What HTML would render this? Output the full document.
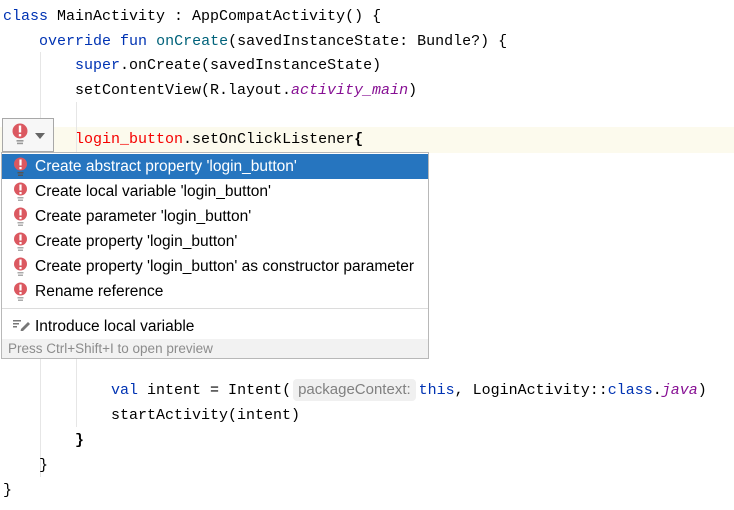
<!DOCTYPE html>
<html><head><meta charset="utf-8"><style>
html,body{margin:0;padding:0;background:#fff;width:734px;height:510px;overflow:hidden;position:relative}
.code{position:absolute;left:3px;font-family:"Liberation Mono",monospace;font-size:15px;white-space:pre;color:#000;line-height:25px;height:25px}
.kw{color:#0033b3}.fn{color:#00627a}.it{color:#871094;font-style:italic}.red{color:#f50000}
.guide{position:absolute;width:1px;background:#e6e6e6}
.cur{position:absolute;left:0;top:127px;width:734px;height:26px;background:#fcfaed}
.bulb{position:absolute;left:2px;top:118px;width:52px;height:34px;border:1px solid #a8a8a8;background:#f7f7f7;box-sizing:border-box}
.pop{position:absolute;left:1px;top:152px;width:428px;height:207px;border:1px solid #b8b8b8;background:#fff;box-sizing:border-box;font-family:"Liberation Sans",sans-serif;font-size:15.5px}
.it2{position:absolute;left:0;width:426px;height:25px;line-height:26px}
.it2 span{position:absolute;left:33px;top:0}
.sel{background:#2675bf;color:#fff}
.ic{position:absolute;left:11px;top:3px}
.foot{position:absolute;left:0;top:186px;width:426px;height:19px;background:#f2f2f2;color:#8c8c8c;font-size:13.5px;line-height:19px;padding-left:6px;box-sizing:border-box}
.hint{display:inline-block;background:#f0f0f0;color:#808080;font-family:"Liberation Sans",sans-serif;font-size:15px;border-radius:4px;padding:0 5px;line-height:22px;margin:0 3px 0 2px}
</style></head><body>
<div class="cur"></div>
<div class="guide" style="left:40px;top:52px;height:425px"></div>
<div class="guide" style="left:76px;top:102px;height:325px"></div>
<div class="code" style="top:4px"><span class="kw">class</span> MainActivity : AppCompatActivity() {</div>
<div class="code" style="top:29px">    <span class="kw">override fun</span> <span class="fn">onCreate</span>(savedInstanceState: Bundle?) {</div>
<div class="code" style="top:53px">        <span class="kw">super</span>.onCreate(savedInstanceState)</div>
<div class="code" style="top:78px">        setContentView(R.layout.<span class="it">activity_main</span>)</div>
<div class="code" style="top:127px">        <span class="red">login_button</span>.setOnClickListener<b>{</b></div>
<div class="code" style="top:378px">            <span class="kw">val</span> intent = Intent(<span class="hint">packageContext:</span><span class="kw">this</span>, LoginActivity::<span class="kw">class</span>.<span class="it">java</span>)</div>
<div class="code" style="top:403px">            startActivity(intent)</div>
<div class="code" style="top:428px">        <b>}</b></div>
<div class="code" style="top:453px">    }</div>
<div class="code" style="top:478px">}</div>

<div class="bulb">
<svg width="52" height="34" style="position:absolute;left:-1px;top:-1px">
<circle cx="18" cy="13" r="7.5" fill="#db5860"/><rect x="16.8" y="7.5" width="2.4" height="7" fill="#fff"/><rect x="16.8" y="16" width="2.4" height="2.4" fill="#fff"/>
<rect x="14.5" y="22" width="7" height="1.6" fill="#999"/><rect x="15" y="24.6" width="6" height="1.6" fill="#999"/>
<path d="M33 15 L43 15 L38 21 Z" fill="#666"/>
</svg></div>

<div class="pop">
<div class="it2 sel" style="top:1px"><svg class="ic" width="16" height="20"><circle cx="7.5" cy="7" r="6.5" fill="#db5860"/><rect x="6.4" y="2.5" width="2.2" height="6" fill="#fff"/><rect x="6.4" y="10" width="2.2" height="2.2" fill="#fff"/><rect x="4.5" y="15" width="6" height="1.5" fill="#555"/><rect x="5" y="17.5" width="5" height="1.5" fill="#555"/></svg><span>Create abstract property 'login_button'</span></div>
<div class="it2" style="top:26px"><svg class="ic" width="16" height="20"><circle cx="7.5" cy="7" r="6.5" fill="#db5860"/><rect x="6.4" y="2.5" width="2.2" height="6" fill="#fff"/><rect x="6.4" y="10" width="2.2" height="2.2" fill="#fff"/><rect x="4.5" y="15" width="6" height="1.5" fill="#aaa"/><rect x="5" y="17.5" width="5" height="1.5" fill="#aaa"/></svg><span>Create local variable 'login_button'</span></div>
<div class="it2" style="top:51px"><svg class="ic" width="16" height="20"><circle cx="7.5" cy="7" r="6.5" fill="#db5860"/><rect x="6.4" y="2.5" width="2.2" height="6" fill="#fff"/><rect x="6.4" y="10" width="2.2" height="2.2" fill="#fff"/><rect x="4.5" y="15" width="6" height="1.5" fill="#aaa"/><rect x="5" y="17.5" width="5" height="1.5" fill="#aaa"/></svg><span>Create parameter 'login_button'</span></div>
<div class="it2" style="top:76px"><svg class="ic" width="16" height="20"><circle cx="7.5" cy="7" r="6.5" fill="#db5860"/><rect x="6.4" y="2.5" width="2.2" height="6" fill="#fff"/><rect x="6.4" y="10" width="2.2" height="2.2" fill="#fff"/><rect x="4.5" y="15" width="6" height="1.5" fill="#aaa"/><rect x="5" y="17.5" width="5" height="1.5" fill="#aaa"/></svg><span>Create property 'login_button'</span></div>
<div class="it2" style="top:101px"><svg class="ic" width="16" height="20"><circle cx="7.5" cy="7" r="6.5" fill="#db5860"/><rect x="6.4" y="2.5" width="2.2" height="6" fill="#fff"/><rect x="6.4" y="10" width="2.2" height="2.2" fill="#fff"/><rect x="4.5" y="15" width="6" height="1.5" fill="#aaa"/><rect x="5" y="17.5" width="5" height="1.5" fill="#aaa"/></svg><span>Create property 'login_button' as constructor parameter</span></div>
<div class="it2" style="top:126px"><svg class="ic" width="16" height="20"><circle cx="7.5" cy="7" r="6.5" fill="#db5860"/><rect x="6.4" y="2.5" width="2.2" height="6" fill="#fff"/><rect x="6.4" y="10" width="2.2" height="2.2" fill="#fff"/><rect x="4.5" y="15" width="6" height="1.5" fill="#aaa"/><rect x="5" y="17.5" width="5" height="1.5" fill="#aaa"/></svg><span>Rename reference</span></div>
<div style="position:absolute;left:0;top:155px;width:426px;height:1px;background:#dcdcdc"></div>
<div class="it2" style="top:161px"><svg class="ic" style="top:5px" width="18" height="12"><rect x="0" y="1" width="8" height="1.5" fill="#777"/><rect x="0" y="4" width="6" height="1.5" fill="#777"/><rect x="0" y="7" width="4" height="1.5" fill="#777"/><path d="M8 10 L15 3 L17 5 L10 12 L7.5 12.5 Z" fill="#777"/></svg><span>Introduce local variable</span></div>
<div class="foot">Press Ctrl+Shift+I to open preview</div>
</div>
</body></html>
